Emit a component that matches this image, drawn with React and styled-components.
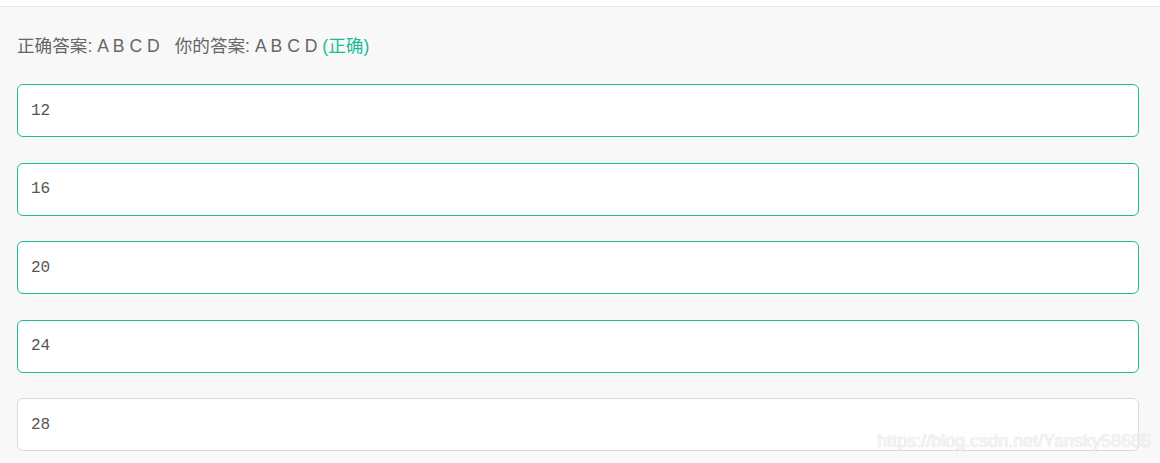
import styled, { createGlobalStyle } from "styled-components"

const GlobalStyle = createGlobalStyle`
body {
    margin: 0;
    background: #fff;
    font-family: "Liberation Sans", "Noto Sans CJK SC", sans-serif;
}
`

const options = [
    { label: "12", picked: true },
    { label: "16", picked: true },
    { label: "20", picked: true },
    { label: "24", picked: true },
    { label: "28", picked: false },
]

const App = () => {
    return (<Page>
        <GlobalStyle />
        <Panel>
            <Result>
                正确答案: A B C D<Gap />你的答案: A B C D <Verdict>(正确)</Verdict>
            </Result>
            <OptionList>
                {options.map((o) => (
                    <Option key={o.label} $picked={o.picked}>{o.label}</Option>
                ))}
            </OptionList>
        </Panel>
        <Watermark>https://blog.csdn.net/Yansky58685</Watermark>
    </Page>)
}

const Page = styled.div`
position: relative;
width: 1160px;
height: 463px;
overflow: hidden;
padding-top: 6px;
box-sizing: border-box;
`
const Panel = styled.section`
background: #f8f8f8;
border-top: 1px solid #e6e6e6;
height: 100%;
padding: 27px 21px 0 17px;
box-sizing: border-box;
`
const Result = styled.div`
font-size: 17.6px;
color: #666;
line-height: 24px;
`
const Gap = styled.span`
display: inline-block;
width: 15px;
`
const Verdict = styled.span`
color: #1abc9c;
`
const OptionList = styled.div`
display: flex;
flex-direction: column;
gap: 25.5px;
margin-top: 26px;
`
const Option = styled.div`
height: 53px;
box-sizing: border-box;
border: 1px solid ${(p) => (p.$picked ? "#1abc9c" : "#d9d9d9")};
border-radius: 6px;
background: #fff;
display: flex;
align-items: center;
padding-left: 13px;
font-family: "Liberation Mono", monospace;
font-size: 16px;
color: #555;
`
const Watermark = styled.div`
position: absolute;
right: 9px;
top: 431px;
font-size: 18px;
color: rgba(255, 255, 255, 0.85);
text-shadow: 0 0 1px rgba(0, 0, 0, 0.25);
`

export default App
